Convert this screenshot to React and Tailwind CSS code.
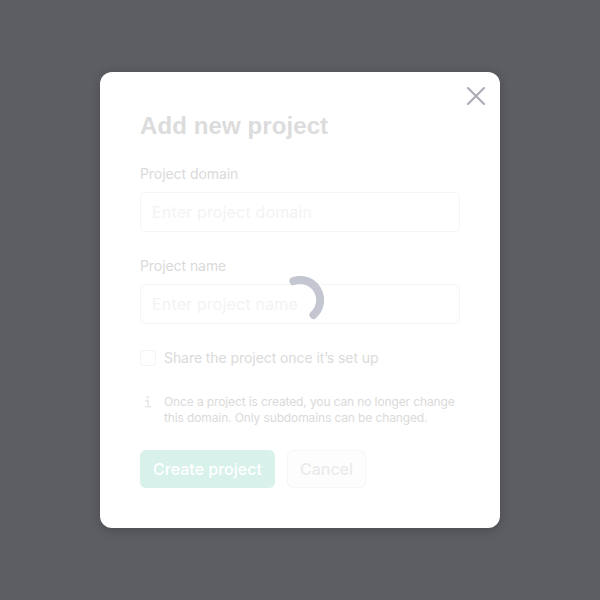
function Field({ label, placeholder }) {
  return (
    <label className="mb-6 block">
      <span className="mb-2 block text-[14px] leading-5 tracking-[-0.07px] text-[#dadada]">{label}</span>
      <input
        className="block h-10 w-full rounded-md border border-[#f5f5f5] bg-white px-[11px] text-base tracking-[0.16px] outline-none placeholder:text-[#f3f3f3]"
        placeholder={placeholder}
      />
    </label>
  );
}

export default function App() {
  return (
    <div className="flex h-[600px] w-[600px] items-center justify-center bg-[#5d5e63] font-['Inter',sans-serif]">
      <div className="relative h-[456px] w-[400px] rounded-xl bg-white px-10 pt-9 shadow-[0_2px_10px_rgba(20,20,35,0.25)]">
        <button aria-label="Close" className="absolute top-3 right-3 size-6">
          <svg viewBox="0 0 24 24" className="size-6" fill="none" stroke="#aaa9b6" strokeWidth="2" strokeLinecap="round">
            <path d="M4 4 20 20M20 4 4 20" />
          </svg>
        </button>

        <h1 className="mb-5 font-['Liberation_Sans',sans-serif] text-2xl leading-9 font-bold tracking-[0.1px] text-[#dcdcdc]">
          Add new project
        </h1>

        <Field label="Project domain" placeholder="Enter project domain" />
        <Field label="Project name" placeholder="Enter project name" />

        <label className="mb-[26px] flex items-center gap-2">
          <span className="size-4 rounded border border-[#f3f3f3] bg-white" />
          <span className="text-[14px] leading-5 tracking-[-0.07px] text-[#dadada]">Share the project once it’s set up</span>
        </label>

        <div className="mb-6 flex gap-2">
          <svg viewBox="0 0 16 16" className="size-4 shrink-0" fill="none" stroke="#e9e9eb" strokeWidth="1.6">
            <path d="M5.2 6.6h3v6M5 12.8h6.2" />
            <circle cx="7.7" cy="3.3" r="1.3" fill="#e9e9eb" stroke="none" />
          </svg>
          <p className="text-xs leading-4 tracking-[-0.12px] whitespace-nowrap text-[#dadada]">
            Once a project is created, you can no longer change
            <br />
            this domain. Only subdomains can be changed.
          </p>
        </div>

        <div className="flex gap-3">
          <button className="h-[38px] w-[135px] rounded-md bg-[#d8f1eb] text-base font-medium tracking-normal whitespace-nowrap text-white">
            Create project
          </button>
          <button className="h-[38px] w-[79px] rounded-md border border-[#f6f6f6] bg-[#fdfdfd] text-base font-medium tracking-[-0.05px] text-[#ebebeb]">
            Cancel
          </button>
        </div>

        <svg
          viewBox="0 0 48 48"
          className="absolute top-1/2 left-1/2 size-12 -translate-1/2"
          fill="none"
          stroke="#c4c6d1"
          strokeWidth="8"
          strokeLinecap="round"
        >
          <path d="M17.4 5.1A20 20 0 0 1 37.4 38.9" />
        </svg>
      </div>
    </div>
  );
}
